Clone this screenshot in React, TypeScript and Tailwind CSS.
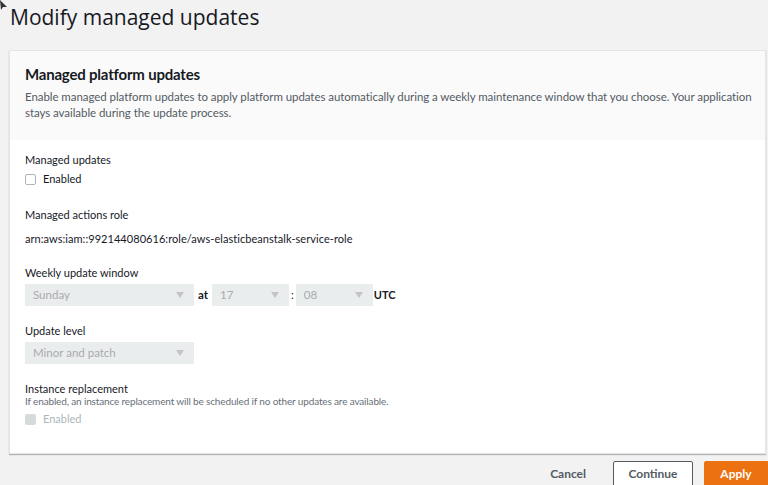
import React from "react";

const Caret = () => (
  <svg width="8" height="6" viewBox="0 0 8 6" className="shrink-0">
    <path d="M0 0 L8 0 L4 6 Z" fill="#c4c4c4" />
  </svg>
);

function Select({ value, w }: { value: string; w: string }) {
  return (
    <div className={`${w} h-[22px] bg-[#eaeded] flex items-center justify-between pl-[8px] pr-[10px] text-[11.5px] text-[#a8abaf]`}>
      <span>{value}</span>
      <Caret />
    </div>
  );
}

export default function App() {
  return (
    <div className="w-[768px] h-[485px] overflow-hidden bg-[#f2f2f2] relative" style={{ fontFamily: 'Lato, "Open Sans", sans-serif' }}>
      <svg className="absolute left-0 top-0" width="8" height="10" viewBox="0 0 8 10">
        <path d="M0 0 L7 7 L3 7 L1 10 Z" fill="#333" />
      </svg>
      <h1 className="pl-[10px] pt-[3px] h-[50px] text-[21px] leading-[28px] text-[#16191f]" style={{ fontFamily: '"Open Sans", sans-serif' }}>Modify managed updates</h1>
      <div className="ml-[9px] mr-[2px] bg-white border border-[#e5e5e5] shadow-[0_1px_1px_rgba(0,0,0,0.25)] h-[404px]">
        <div className="bg-[#fafafa] h-[89px] pl-[15px] pr-[4px] pt-[13px]">
          <div className="text-[15px] font-bold text-[#16191f] leading-[20px] tracking-[-0.2px]">Managed platform updates</div>
          <div className="mt-[5px] text-[11.5px] leading-[16px] tracking-[-0.06px] text-[#545b64]">
            Enable managed platform updates to apply platform updates automatically during a weekly maintenance window that you choose. Your application stays available during the update process.
          </div>
        </div>
        <div className="px-[15px] pt-[12px] text-[11px] text-[#16191f]">
          <div className="leading-[16px]">Managed updates</div>
          <div className="mt-[3px] flex items-center gap-[7px] h-[16px]">
            <div className="w-[11px] h-[11px] border border-[#aab7b8] rounded-[2px] bg-white" />
            <span>Enabled</span>
          </div>
          <div className="mt-[20px] leading-[16px]">Managed actions role</div>
          <div className="mt-[8px] leading-[16px] tracking-[0.05px]">arn:aws:iam::992144080616:role/aws-elasticbeanstalk-service-role</div>
          <div className="mt-[18px] leading-[16px]">Weekly update window</div>
          <div className="mt-[3px] flex items-center h-[22px]">
            <Select value="Sunday" w="w-[169px]" />
            <span className="ml-[4px] mr-[4px] font-bold text-[11.5px]">at</span>
            <Select value="17" w="w-[77px]" />
            <span className="ml-[2px] mr-[2px]">:</span>
            <Select value="08" w="w-[77px]" />
            <span className="ml-[1px] font-bold text-[11px]">UTC</span>
          </div>
          <div className="mt-[17px] leading-[16px]">Update level</div>
          <div className="mt-[3px]">
            <Select value="Minor and patch" w="w-[169px]" />
          </div>
          <div className="mt-[17px] leading-[16px]">Instance replacement</div>
          <div className="-mt-[3px] text-[10px] leading-[14px] tracking-[-0.15px] text-[#687078]">If enabled, an instance replacement will be scheduled if no other updates are available.</div>
          <div className="mt-[3px] flex items-center gap-[7px] h-[16px] text-[#aab7b8]">
            <div className="w-[11px] h-[11px] rounded-[2px] bg-[#d5dbdb]" />
            <span>Enabled</span>
          </div>
        </div>
      </div>
      <div className="flex justify-end items-start mt-[7px] text-[12px] font-bold">
        <button className="mr-[27px] mt-[4px] text-[#545b64]">Cancel</button>
        <button className="w-[80px] h-[26px] border border-[#545b64] rounded-[2px] bg-white text-[#545b64] mr-[11px]">Continue</button>
        <button className="w-[64px] h-[26px] bg-[#ec7211] border border-[#ec7211] rounded-l-[2px] text-white">Apply</button>
      </div>
    </div>
  );
}
